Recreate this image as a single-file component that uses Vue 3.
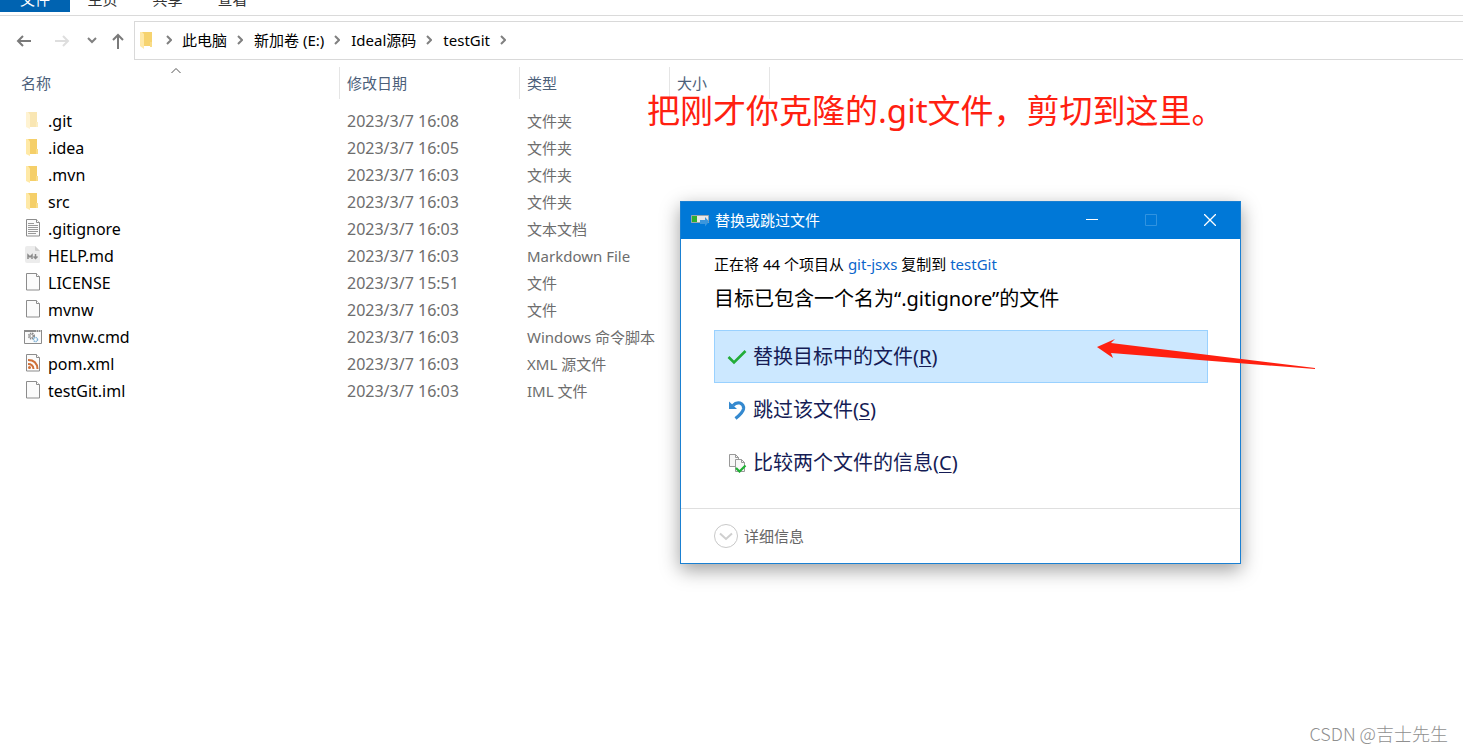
<script setup>
const tabs = ['主页', '共享', '查看']
const crumbs = ['此电脑', '新加卷 (E:)', 'Ideal源码', 'testGit']
const files = [
  { name: '.git', date: '2023/3/7 16:08', type: '文件夹', icon: 'folder', hidden: true },
  { name: '.idea', date: '2023/3/7 16:05', type: '文件夹', icon: 'folder' },
  { name: '.mvn', date: '2023/3/7 16:03', type: '文件夹', icon: 'folder' },
  { name: 'src', date: '2023/3/7 16:03', type: '文件夹', icon: 'folder' },
  { name: '.gitignore', date: '2023/3/7 16:03', type: '文本文档', icon: 'text' },
  { name: 'HELP.md', date: '2023/3/7 16:03', type: 'Markdown File', icon: 'md' },
  { name: 'LICENSE', date: '2023/3/7 15:51', type: '文件', icon: 'file' },
  { name: 'mvnw', date: '2023/3/7 16:03', type: '文件', icon: 'file' },
  { name: 'mvnw.cmd', date: '2023/3/7 16:03', type: 'Windows 命令脚本', icon: 'cmd' },
  { name: 'pom.xml', date: '2023/3/7 16:03', type: 'XML 源文件', icon: 'xml' },
  { name: 'testGit.iml', date: '2023/3/7 16:03', type: 'IML 文件', icon: 'file' },
]
const choices = [
  { label: '替换目标中的文件', key: 'R', icon: 'check', active: true },
  { label: '跳过该文件', key: 'S', icon: 'undo' },
  { label: '比较两个文件的信息', key: 'C', icon: 'compare' },
]
</script>

<template>
  <div class="explorer">
    <nav class="ribbon">
      <button class="tab primary">文件</button>
      <button v-for="t in tabs" :key="t" class="tab">{{ t }}</button>
    </nav>

    <div class="toolbar">
      <div class="history">
        <button class="nav-btn" aria-label="后退">
          <svg width="16" height="14" viewBox="0 0 16 14" fill="none" stroke="#7a7a7a" stroke-width="2"><path d="M15 7H2M7 2 2 7l5 5" /></svg>
        </button>
        <button class="nav-btn forward" aria-label="前进">
          <svg width="16" height="14" viewBox="0 0 16 14" fill="none" stroke="#dedede" stroke-width="2"><path d="M1 7h13M9 2l5 5-5 5" /></svg>
        </button>
        <button class="nav-btn recent" aria-label="最近位置">
          <svg width="10" height="7" viewBox="0 0 10 7" fill="none" stroke="#808080" stroke-width="2"><path d="m1 1 4 4 4-4" /></svg>
        </button>
        <button class="nav-btn up" aria-label="向上">
          <svg width="14" height="16" viewBox="0 0 14 16" fill="none" stroke="#7a7a7a" stroke-width="2"><path d="M7 16V2M2 7l5-5 5 5" /></svg>
        </button>
      </div>
      <div class="address">
        <svg class="folder" width="12" height="18" viewBox="0 0 12 18"><path d="M2 1h10v14H2z" fill="#f6d36f" /><path d="M10 11h2v5h-2z" fill="#f9dc87" /><path d="M0 1h2l2 2v15l-4-3z" fill="#ffe9a8" /></svg>
        <svg class="sep" width="6" height="10" viewBox="0 0 6 10" fill="none" stroke="#808080" stroke-width="2"><path d="m1 1 4 4-4 4" /></svg>
        <template v-for="c in crumbs" :key="c">
          <button class="crumb">{{ c }}</button>
          <svg class="sep" width="6" height="10" viewBox="0 0 6 10" fill="none" stroke="#808080" stroke-width="2"><path d="m1 1 4 4-4 4" /></svg>
        </template>
      </div>
    </div>

    <table class="files">
      <colgroup><col class="c-name" /><col class="c-date" /><col class="c-type" /><col class="c-size" /></colgroup>
      <thead>
        <tr>
          <th>
            <span>名称</span>
            <svg class="sort" width="10" height="6" viewBox="0 0 10 6" fill="none" stroke="#555"><path d="m.5 5 4.500-4.500L9.500 5" /></svg>
          </th>
          <th>修改日期</th>
          <th>类型</th>
          <th>大小</th>
        </tr>
      </thead>
      <tbody>
        <tr v-for="f in files" :key="f.name">
          <td>
            <div class="name">
              <span class="icon">
                <svg v-if="f.icon === 'folder'" :class="{ faded: f.hidden }" width="18" height="18" viewBox="0 0 18 18">
                  <path d="M4 1h9v15H4z" fill="#f5cf69" />
                  <path d="M12 11h2v5h-2z" fill="#f9dc87" />
                  <path d="M2 1h2l2 2.500V18l-4-2z" fill="#ffe9a6" />
                </svg>
                <svg v-else-if="f.icon === 'cmd'" width="18" height="18" viewBox="0 0 18 18">
                  <path d="M.5 3.500h17v13H.5z" fill="#fbfbfb" stroke="#8b8b8b" />
                  <path d="M0 3h18v2H0z" fill="#8b8b8b" />
                  <path d="M12 4h1m1 0h1m1 0h1" stroke="#fff" />
                  <circle cx="7.500" cy="9" r="2.500" fill="none" stroke="#888" stroke-width="2" stroke-dasharray="1.300 .7" />
                  <circle cx="7.500" cy="9" r="1.500" fill="none" stroke="#aaa" />
                  <circle cx="11.500" cy="12.500" r="2" fill="#fff" stroke="#7fb2d6" stroke-width="1.500" stroke-dasharray="1.200 .5" />
                </svg>
                <svg v-else-if="f.icon === 'md'" width="18" height="18" viewBox="0 0 18 18">
                  <path d="M3 0h8l5 5v11q0 1-1 1H3q-2 0-2-2V2q0-2 2-2z" fill="#ececec" />
                  <path d="M11 0v4q0 1 1 1h4z" fill="#cfcfcf" />
                  <path d="M4 13V9l2 2 2-2v4M11.500 8v4M9.500 10.500l2 2 2-2" fill="none" stroke="#8a8a8a" stroke-width="1.500" />
                </svg>
                <svg v-else width="18" height="18" viewBox="0 0 18 18">
                  <path d="M2.500.5h10l3 3v13.500h-13z" fill="#fbfbfb" stroke="#8c8c8c" />
                  <path d="M12.500.5v3h3" fill="#fff" stroke="#8c8c8c" />
                  <path v-if="f.icon === 'text'" d="M4 4.500h6M4 6.500h10M4 8.500h10M4 10.500h10M4 12.500h10M4 14.500h8" stroke="#999" />
                  <g v-if="f.icon === 'xml'" fill="none" stroke="#cf7038" stroke-width="2">
                    <path d="M4 6q9 0 9.500 9M4 10q5 0 5.500 5" />
                    <circle cx="5.500" cy="13.500" r="1.500" fill="#cf7038" stroke="none" />
                  </g>
                </svg>
              </span>
              <span>{{ f.name }}</span>
            </div>
          </td>
          <td class="date">{{ f.date }}</td>
          <td>{{ f.type }}</td>
          <td></td>
        </tr>
      </tbody>
    </table>

    <section class="dialog" role="dialog" aria-labelledby="dialog-title">
      <header class="titlebar">
        <svg width="18" height="14" viewBox="0 0 18 14">
          <path d="M.5 2.500h17v7H.5z" fill="#e8e8e8" stroke="#9aa6ad" />
          <path d="M1 3h5v6H1z" fill="#2eae32" />
          <path d="M9 7h5V4l4 4.500-4 5V11H9z" fill="#3a96dd" />
        </svg>
        <span id="dialog-title" class="title">替换或跳过文件</span>
        <button class="win" aria-label="最小化"><svg width="12" height="12" viewBox="0 0 12 12"><path d="M0 5.500h12" stroke="#fff" /></svg></button>
        <button class="win" aria-label="最大化" disabled><svg width="12" height="12" viewBox="0 0 12 12"><path d="M.5.5h11v11H.5z" fill="none" stroke="#3093e0" /></svg></button>
        <button class="win" aria-label="关闭"><svg width="12" height="12" viewBox="0 0 12 12"><path d="m0 0 12 12M12 0 0 12" stroke="#fff" stroke-width="1.300" /></svg></button>
      </header>
      <div class="body">
        <p class="status">正在将 44 个项目从 <a href="#">git-jsxs</a> 复制到 <a href="#">testGit</a></p>
        <h1>目标已包含一个名为“.gitignore”的文件</h1>
        <div class="choices">
          <button v-for="c in choices" :key="c.key" class="choice" :class="{ active: c.active }">
            <svg v-if="c.icon === 'check'" width="20" height="20" viewBox="0 0 20 20"><path d="m1.500 10 5.500 5.500L18.500 4" fill="none" stroke="#22ac38" stroke-width="2.600" /></svg>
            <svg v-else-if="c.icon === 'undo'" width="20" height="20" viewBox="0 0 20 20">
              <path d="M6 5.500q3-3.500 7-2.500 4 1.500 3.500 6-.5 3.500-8 9.500" fill="none" stroke="#3489cf" stroke-width="3.200" />
              <path d="M2 1.500v7.500h8z" fill="#3489cf" />
            </svg>
            <svg v-else width="20" height="20" viewBox="0 0 20 20">
              <path d="M2.500 1.500h6l3 3v9h-9z" fill="#f7f7f7" stroke="#999" />
              <path d="M8.500 1.500v3h3" fill="none" stroke="#999" />
              <path d="M8.500 6.500h6l3 3v9h-9z" fill="#f7f7f7" stroke="#999" />
              <path d="M14.500 6.500v3h3" fill="none" stroke="#999" />
              <path d="m9 15 3.500 3.500 6-6" fill="none" stroke="#1fb034" stroke-width="2.200" />
            </svg>
            <span>{{ c.label }}(<u>{{ c.key }}</u>)</span>
          </button>
        </div>
      </div>
      <footer>
        <button class="details">
          <svg width="24" height="24" viewBox="0 0 24 24" fill="none"><circle cx="12" cy="12" r="11.500" stroke="#c8c8c8" /><path d="m6 9.500 6 5.500 6-5.500" stroke="#cfcfcf" stroke-width="2" /></svg>
          <span>详细信息</span>
        </button>
      </footer>
    </section>

    <p class="note">把刚才你克隆的.git文件，剪切到这里。</p>
    <svg class="arrow" width="220" height="34" viewBox="0 0 220 34"><path d="M0 10 18 2l-4 4 204 25v1L14 16l2 5z" fill="#ff2010" /></svg>
    <p class="watermark">CSDN @吉士先生</p>
  </div>
</template>

<style>
body { margin: 0; background: #fff; }
</style>

<style scoped>
.explorer {
  position: relative;
  min-height: 100vh;
  overflow: hidden;
  font-family: "Noto Sans", "Noto Sans CJK SC", sans-serif;
  font-size: 15px;
  line-height: 20px;
  color: #000;
}
button { margin: 0; padding: 0; border: 0; background: none; font: inherit; color: inherit; }
p, h1 { margin: 0; }
svg { display: block; flex: none; }

.ribbon { display: flex; height: 12px; padding-bottom: 3px; border-bottom: 1px solid #dadada; }
.tab {
  display: flex;
  align-items: flex-end;
  justify-content: center;
  width: 65px;
  height: 12px;
  padding-bottom: 3px;
  box-sizing: border-box;
  overflow: hidden;
  color: #333;
}
.tab.primary { width: 70px; background: #0063b1; color: #fff; }

.toolbar { display: flex; padding-top: 5px; }
.history { display: flex; align-items: center; width: 134px; padding-left: 16px; box-sizing: border-box; }
.forward { margin-left: 22px; }
.recent { margin-left: 17px; }
.up { margin-left: 14px; }
.address { display: flex; align-items: center; flex: 1; height: 35px; padding: 0 0 2px 5px; border: 1px solid #d9d9d9; border-right: 0; }
.address .sep { margin: 0 11px 0 10px; }
.address .folder + .sep { margin: 0 10px 0 14px; }

.files { width: 100%; border-collapse: collapse; table-layout: fixed; margin-top: 7px; }
.c-name { width: 340px; }
.c-date { width: 180px; }
.c-type { width: 150px; }
.files th {
  position: relative;
  height: 32px;
  padding: 0 0 0 7px;
  text-align: left;
  font-weight: 400;
  color: #4c607a;
  background: linear-gradient(#e5e5e5, #e5e5e5) right / 1px 100% no-repeat;
}
.files th:first-child { padding-left: 21px; }
.files th:last-child { background-position: 99px 0; }
.sort { position: absolute; left: 171px; top: 1px; }
.files td { height: 27px; padding: 0 0 0 7px; color: #6d6d6d; white-space: nowrap; }
.files td:first-child { padding-left: 24px; color: #000; font-size: 16px; }
.files .date { font-size: 16px; }
.files tbody::before { content: ""; display: block; height: 8px; }
.name { display: flex; align-items: center; gap: 6px; }
.icon { padding-bottom: 2px; }
.faded { opacity: .5; }

.dialog {
  position: absolute;
  left: 680px;
  top: 201px;
  width: 559px;
  border: 1px solid #1a80d2;
  background: #fff;
  box-shadow: 0 6px 18px rgba(0, 0, 0, .38);
}
.titlebar { display: flex; align-items: center; height: 35px; padding: 0 1px 2px 10px; background: #0078d7; color: #fff; }
.title { flex: 1; margin-left: 6px; }
.win { display: flex; align-items: center; justify-content: center; width: 59px; height: 35px; }
.body { padding: 15px 32px 19px 33px; }
a { color: #0b66cc; text-decoration: none; }
h1 { margin-top: 11px; font-size: 20px; line-height: 28px; font-weight: 400; }
.choices { margin-top: 17px; }
.choice {
  display: flex;
  align-items: center;
  gap: 6px;
  width: 100%;
  height: 53px;
  padding-left: 12px;
  border: 1px solid transparent;
  font-size: 20px;
  color: #151c55;
}
.choice.active { background: #cce8ff; border-color: #99d1ff; }
u { text-decoration-thickness: 1px; text-underline-offset: 2px; }
footer { padding: 15px 33px; border-top: 1px solid #dfdfdf; }
.details { display: flex; align-items: center; gap: 6px; color: #666; }

.note { position: absolute; left: 647px; top: 89px; font-size: 33px; line-height: 44px; color: #ff2010; white-space: nowrap; }
.arrow { position: absolute; left: 1097px; top: 337px; }
.watermark { position: absolute; right: 15px; bottom: 6px; font-family: "Noto Sans CJK SC", sans-serif; font-size: 18px; line-height: 24px; font-weight: 300; color: #909090; }
</style>
